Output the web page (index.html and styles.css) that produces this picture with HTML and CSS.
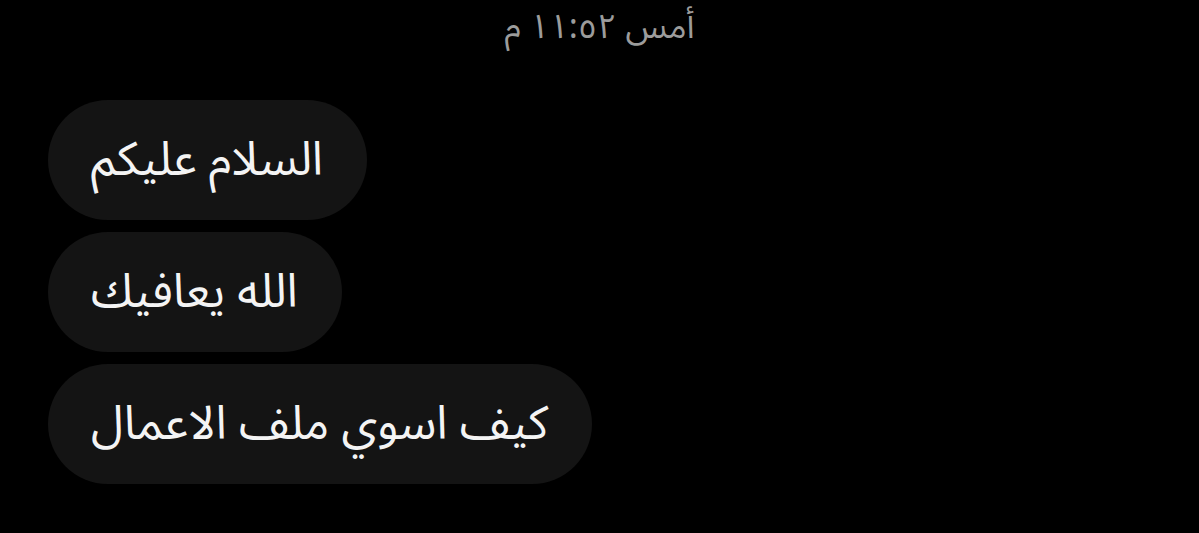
FILE: index.html
```html
<!DOCTYPE html>
<html lang="ar">
<head>
<meta charset="utf-8">
<link rel="stylesheet" href="styles.css">
</head>
<body>
<div class="chat">
  <div class="stamp" dir="rtl">أمس ١١:٥٢ م</div>
  <div class="messages">
    <div class="bubble" dir="rtl">السلام عليكم</div>
    <div class="bubble" dir="rtl">الله يعافيك</div>
    <div class="bubble" dir="rtl">كيف اسوي ملف الاعمال</div>
  </div>
</div>
</body>
</html>
```
FILE: styles.css
```css
html, body {
  margin: 0;
  padding: 0;
  background: #000;
  height: 100%;
}
.chat {
  font-family: "Noto Sans Arabic", "Noto Sans", "DejaVu Sans", sans-serif;
  display: flex;
  flex-direction: column;
}
.stamp {
  text-align: center;
  color: #9c9c9c;
  font-size: 34px;
  line-height: 50px;
  height: 50px;
  margin-top: 2px;
}
.messages {
  margin-top: 48px;
  padding-left: 48px;
  display: flex;
  flex-direction: column;
  align-items: flex-start;
  gap: 12px;
}
.bubble {
  background: #141414;
  color: #f4f4f4;
  height: 120px;
  box-sizing: border-box;
  padding: 0 44px 0 43px;
  border-radius: 60px;
  display: flex;
  align-items: center;
  font-size: 47px;
}
```
